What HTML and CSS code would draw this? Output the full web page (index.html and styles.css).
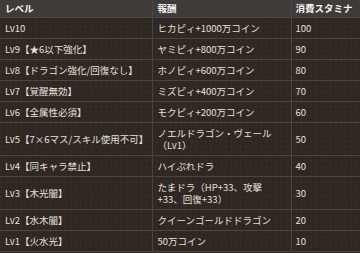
FILE: index.html
```html
<!DOCTYPE html>
<html lang="ja">
<head>
<meta charset="utf-8">
<link rel="stylesheet" href="styles.css">
</head>
<body>
<table class="stamina">
  <colgroup><col class="c1"><col class="c2"><col class="c3"></colgroup>
  <thead>
    <tr><th>レベル</th><th>報酬</th><th>消費スタミナ</th></tr>
  </thead>
  <tbody>
    <tr><td>Lv10</td><td>ヒカピィ+1000万コイン</td><td>100</td></tr>
    <tr><td>Lv9【★6以下強化】</td><td>ヤミピィ+800万コイン</td><td>90</td></tr>
    <tr><td>Lv8【ドラゴン強化/回復なし】</td><td>ホノピィ+600万コイン</td><td>80</td></tr>
    <tr><td>Lv7【覚醒無効】</td><td>ミズピィ+400万コイン</td><td>70</td></tr>
    <tr><td>Lv6【全属性必須】</td><td>モクピィ+200万コイン</td><td>60</td></tr>
    <tr><td>Lv5【7×6マス/スキル使用不可】</td><td>ノエルドラゴン・ヴェール（Lv1）</td><td>50</td></tr>
    <tr><td>Lv4【同キャラ禁止】</td><td>ハイぷれドラ</td><td>40</td></tr>
    <tr><td>Lv3【木光闇】</td><td>たまドラ（HP+33、攻撃+33、回復+33）</td><td>30</td></tr>
    <tr><td>Lv2【水木闇】</td><td>クイーンゴールドドラゴン</td><td>20</td></tr>
    <tr><td>Lv1【火水光】</td><td>50万コイン</td><td>10</td></tr>
  </tbody>
</table>
</body>
</html>
```
FILE: styles.css
```css
html, body {
  margin: 0;
  padding: 0;
  background: #2f2822;
}
body {
  width: 360px;
  height: 253px;
  overflow: hidden;
  font-family: "Noto Sans CJK JP", "Noto Sans", sans-serif;
  font-size: 9.5px;
  color: #e4e0dc;
}
.stamina {
  border-collapse: collapse;
  table-layout: fixed;
  width: 361px;
  background-color: #2f2822;
  background-image:
    radial-gradient(circle at 20% 30%, rgba(255,255,255,0.025) 0 1px, transparent 1.5px),
    radial-gradient(circle at 70% 60%, rgba(0,0,0,0.08) 0 1px, transparent 1.5px);
  background-size: 5px 5px, 7px 7px;
}
.c1 { width: 152px; }
.c2 { width: 139px; }
.c3 { width: 70px; }
.stamina th,
.stamina td {
  border: 1px solid #4c443d;
  text-align: left;
  vertical-align: middle;
  line-height: 12px;
}
.stamina th {
  background: #3e3b39;
  color: #f4f2f0;
  font-weight: bold;
  padding: 2px 4px 3px;
  border-top: none;
}
.stamina td {
  padding: 4px 6px 4px 4px;
}
.stamina tr > :first-child { border-left: none; padding-left: 5px; }
.stamina tr > :nth-child(2) { padding-left: 5px; }
```
